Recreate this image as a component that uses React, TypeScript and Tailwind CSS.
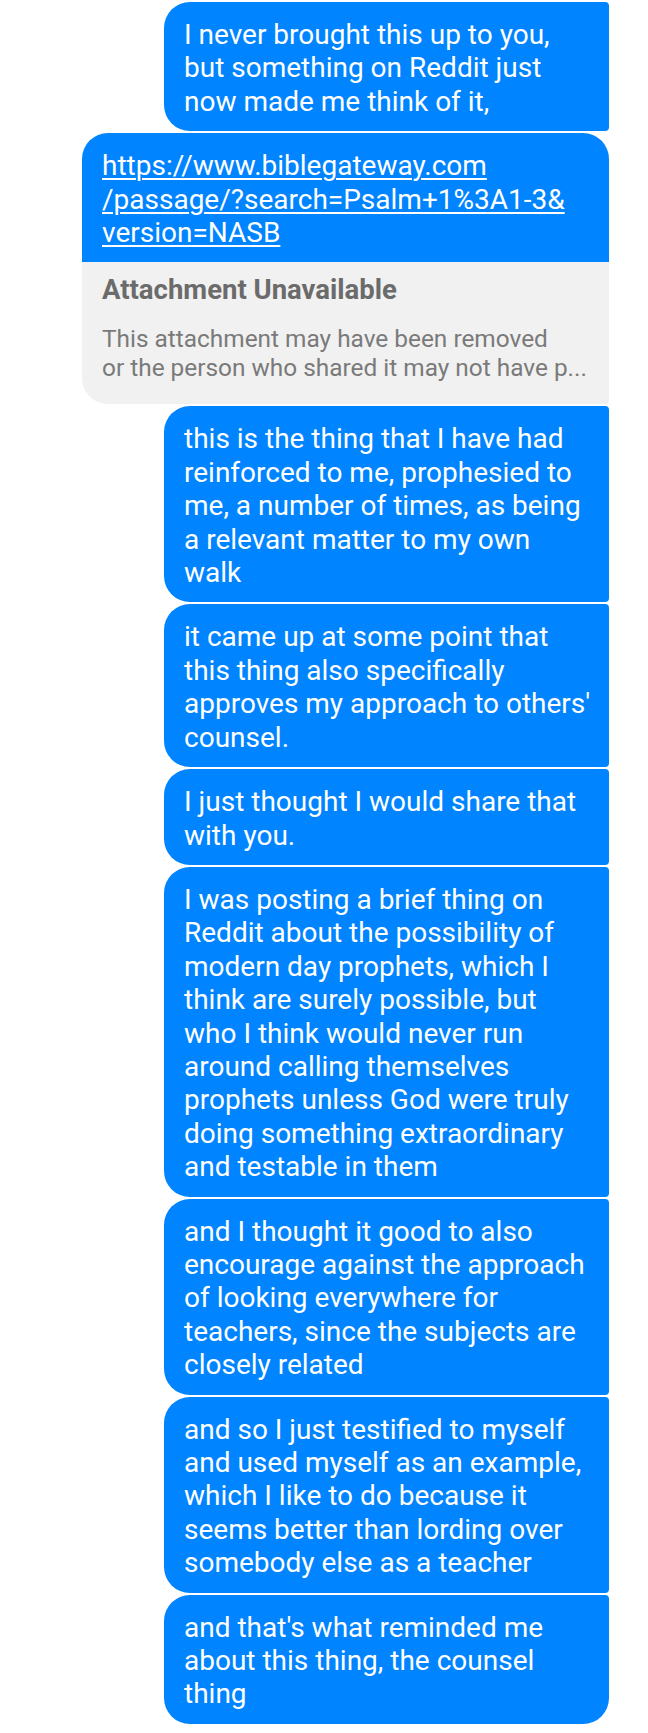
import React from "react";

type Msg = { lines: string[]; last?: boolean };

const before: Msg = {
  lines: [
    "I never brought this up to you,",
    "but something on Reddit just",
    "now made me think of it,",
  ],
};

const after: Msg[] = [
  {
    lines: [
      "this is the thing that I have had",
      "reinforced to me, prophesied to",
      "me, a number of times, as being",
      "a relevant matter to my own",
      "walk",
    ],
  },
  {
    lines: [
      "it came up at some point that",
      "this thing also specifically",
      "approves my approach to others'",
      "counsel.",
    ],
  },
  { lines: ["I just thought I would share that", "with you."] },
  {
    lines: [
      "I was posting a brief thing on",
      "Reddit about the possibility of",
      "modern day prophets, which I",
      "think are surely possible, but",
      "who I think would never run",
      "around calling themselves",
      "prophets unless God were truly",
      "doing something extraordinary",
      "and testable in them",
    ],
  },
  {
    lines: [
      "and I thought it good to also",
      "encourage against the approach",
      "of looking everywhere for",
      "teachers, since the subjects are",
      "closely related",
    ],
  },
  {
    lines: [
      "and so I just testified to myself",
      "and used myself as an example,",
      "which I like to do because it",
      "seems better than lording over",
      "somebody else as a teacher",
    ],
  },
  {
    lines: [
      "and that's what reminded me",
      "about this thing, the counsel",
      "thing",
    ],
    last: true,
  },
];

function Bubble({ msg }: { msg: Msg }) {
  return (
    <div
      className={`w-[445px] bg-[#0084ff] text-white px-[20px] pt-[16px] pb-[13px] rounded-tl-[26px] rounded-bl-[26px] rounded-tr-[4px] ${
        msg.last ? "rounded-br-[26px]" : "rounded-br-[4px]"
      }`}
    >
      {msg.lines.map((l, i) => (
        <div key={i} className="whitespace-nowrap">
          {l}
        </div>
      ))}
    </div>
  );
}

export default function App() {
  return (
    <div className="w-[648px] h-[1733px] bg-white overflow-hidden font-['Roboto',sans-serif] text-[28px] leading-[33.4px]">
      <div className="flex flex-col items-end gap-[2px] pt-[2px] pr-[39px]">
        <Bubble msg={before} />

        {/* shared link with unavailable preview */}
        <div className="w-[527px] rounded-t-[26px] rounded-bl-[26px] rounded-br-[4px] overflow-hidden">
          <div className="bg-[#0084ff] text-white px-[20px] pt-[16px] pb-[13px]">
            <div className="underline decoration-[1.5px] underline-offset-[3px] whitespace-nowrap">
              https://www.biblegateway.com
            </div>
            <div className="underline decoration-[1.5px] underline-offset-[3px] whitespace-nowrap">
              /passage/?search=Psalm+1%3A1-3&amp;
            </div>
            <div className="underline decoration-[1.5px] underline-offset-[3px] whitespace-nowrap">
              version=NASB
            </div>
          </div>
          <div className="bg-[#f1f1f1] h-[142px] px-[20px] pt-[12px]">
            <div className="text-[27.5px] leading-[32px] font-bold text-[#6b6b6b] whitespace-nowrap">
              Attachment Unavailable
            </div>
            <div className="mt-[19px] text-[24.4px] leading-[28.5px] text-[#7a7a7a]">
              <div className="whitespace-nowrap">This attachment may have been removed</div>
              <div className="whitespace-nowrap">or the person who shared it may not have p...</div>
            </div>
          </div>
        </div>

        {after.map((m, i) => (
          <Bubble key={i} msg={m} />
        ))}
      </div>
    </div>
  );
}
